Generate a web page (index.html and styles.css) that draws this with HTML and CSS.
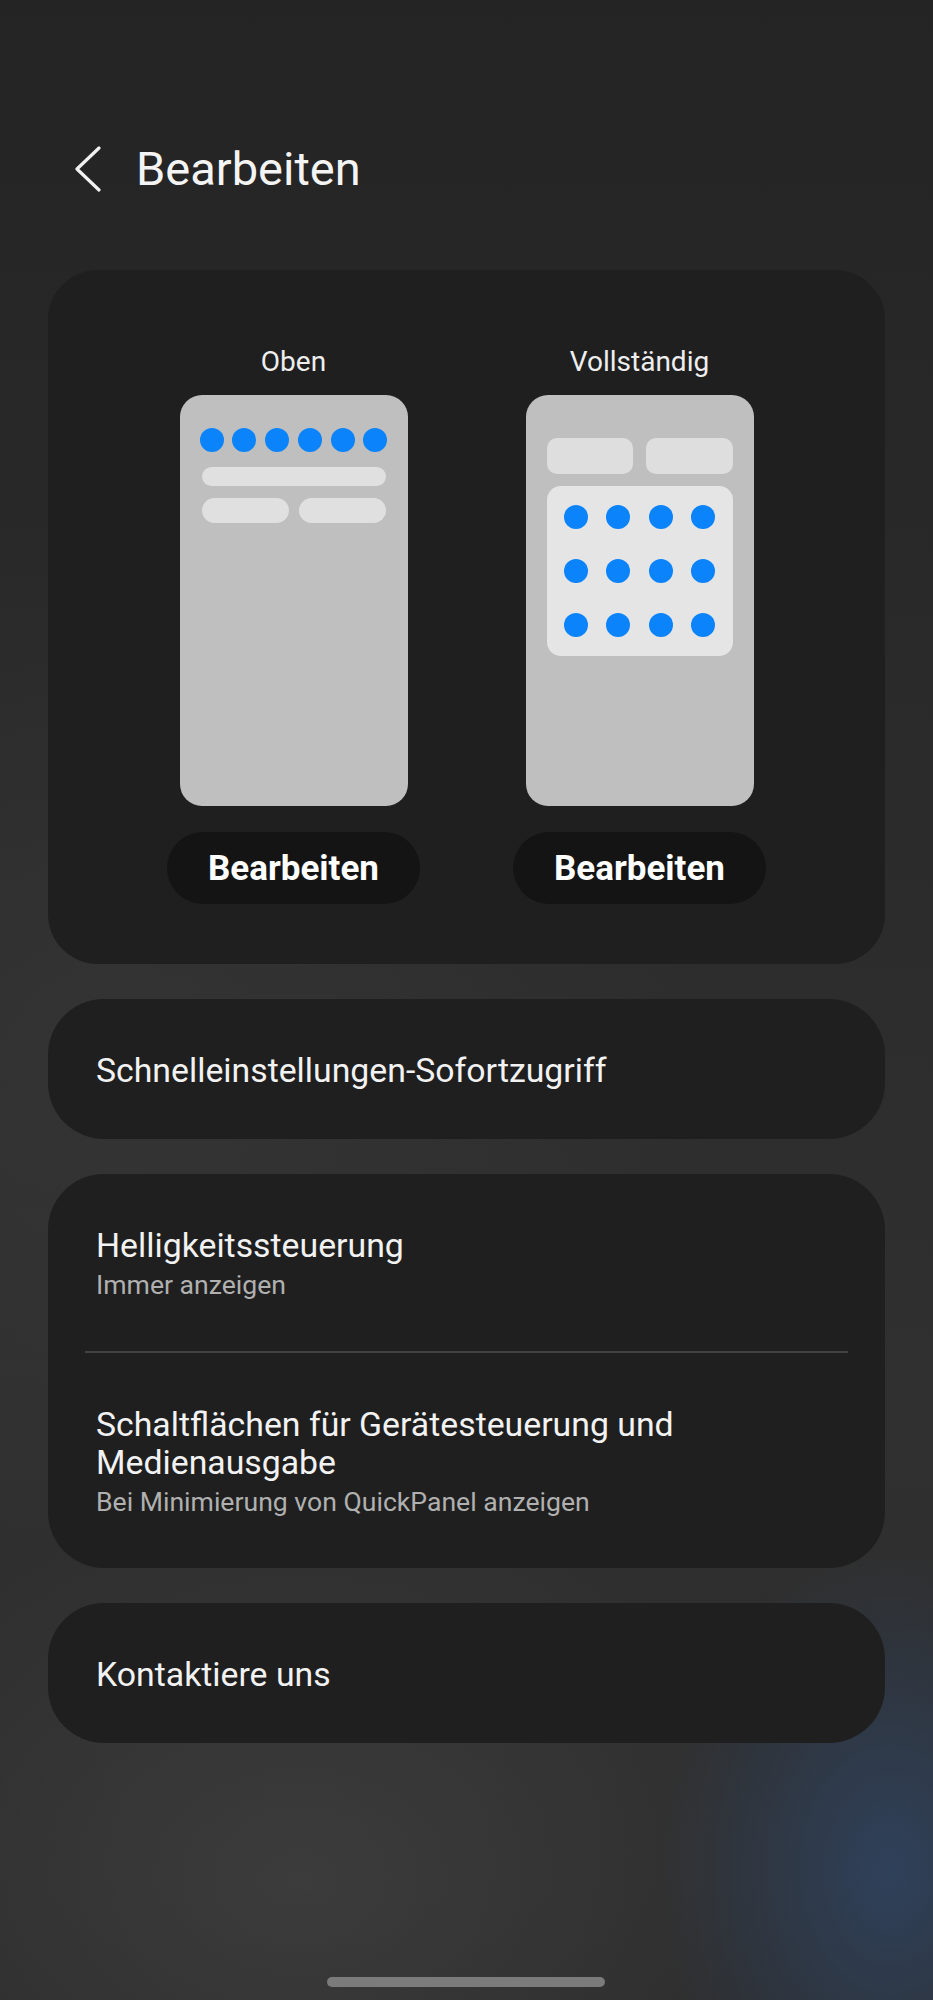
FILE: index.html
```html
<!DOCTYPE html>
<html lang="de">
<head>
    <meta charset="UTF-8">
    <meta name="viewport" content="width=device-width, initial-scale=1.0">
    <title>Bearbeiten</title>
    <link rel="stylesheet" href="styles.css">
</head>
<body>
    <div class="screen">
        <header class="topbar">
            <svg class="back" width="28" height="46" viewBox="0 0 28 46">
                <path d="M25 2 L3 23 L25 44" fill="none" stroke="#f2f2f2" stroke-width="3.2" stroke-linecap="round" stroke-linejoin="round"/>
            </svg>
            <h1 class="title">Bearbeiten</h1>
        </header>

        <main class="list">
            <section class="card layouts">
                <div class="layout">
                    <div class="layout-label">Oben</div>
                    <div class="phone">
                        <div class="dot-row">
                            <span class="dot"></span><span class="dot"></span><span class="dot"></span>
                            <span class="dot"></span><span class="dot"></span><span class="dot"></span>
                        </div>
                        <div class="bar wide"></div>
                        <div class="bar-pair">
                            <div class="bar half"></div>
                            <div class="bar half"></div>
                        </div>
                    </div>
                    <button class="edit-btn">Bearbeiten</button>
                </div>

                <div class="layout">
                    <div class="layout-label">Vollständig</div>
                    <div class="phone full">
                        <div class="tile-pair">
                            <div class="tile"></div>
                            <div class="tile"></div>
                        </div>
                        <div class="tile-grid">
                            <span class="dot"></span><span class="dot"></span><span class="dot"></span><span class="dot"></span>
                            <span class="dot"></span><span class="dot"></span><span class="dot"></span><span class="dot"></span>
                            <span class="dot"></span><span class="dot"></span><span class="dot"></span><span class="dot"></span>
                        </div>
                    </div>
                    <button class="edit-btn">Bearbeiten</button>
                </div>
            </section>

            <section class="card">
                <div class="item">
                    <div class="item-title">Schnelleinstellungen-Sofortzugriff</div>
                </div>
            </section>

            <section class="card">
                <div class="item">
                    <div class="item-title">Helligkeitssteuerung</div>
                    <div class="item-sub">Immer anzeigen</div>
                </div>
                <div class="divider"></div>
                <div class="item">
                    <div class="item-title">Schaltflächen für Gerätesteuerung und<br>Medienausgabe</div>
                    <div class="item-sub">Bei Minimierung von QuickPanel anzeigen</div>
                </div>
            </section>

            <section class="card">
                <div class="item">
                    <div class="item-title">Kontaktiere uns</div>
                </div>
            </section>
        </main>

        <div class="home-bar"></div>
    </div>
</body>
</html>
```

FILE: styles.css
```css
body {
    margin: 0;
    font-family: Roboto, "Noto Sans", sans-serif;
    color: #f2f2f2;
    background: #272727;
}
.screen {
    position: relative;
    width: 933px;
    height: 2000px;
    overflow: hidden;
    background:
        radial-gradient(ellipse 230px 320px at 890px 1870px, rgba(48, 70, 102, 0.8), rgba(48, 70, 102, 0) 100%),
        radial-gradient(ellipse 520px 380px at 300px 1880px, rgba(72, 72, 72, 0.55), rgba(72, 72, 72, 0) 100%),
        radial-gradient(ellipse 600px 500px at 120px 1050px, rgba(60, 60, 60, 0.45), rgba(60, 60, 60, 0) 100%),
        linear-gradient(180deg, #242424 0%, #2b2b2b 40%, #303030 70%, #2c2c2c 100%);
}

/* header */
.topbar {
    display: flex;
    align-items: center;
    padding: 142px 0 0 74px;
    margin-bottom: 74px;
}
.back {
    display: block;
    flex-shrink: 0;
}
.title {
    margin: 0 0 0 34px;
    font-size: 47px;
    font-weight: 400;
    line-height: 54px;
    color: #f4f4f4;
}

/* cards */
.list {
    display: flex;
    flex-direction: column;
    gap: 35px;
    padding: 0 48px;
}
.card {
    background: #1f1f1f;
    border-radius: 56px;
}

/* layout previews */
.layouts {
    display: flex;
    justify-content: center;
    gap: 93px;
    padding: 75px 0 60px;
    border-radius: 50px;
}
.layout {
    width: 253px;
    display: flex;
    flex-direction: column;
    align-items: center;
}
.layout-label {
    font-size: 28px;
    line-height: 34px;
    color: #eeeeee;
    margin-bottom: 16px;
}
.phone {
    box-sizing: border-box;
    width: 228px;
    height: 411px;
    background: #bfbfbf;
    border-radius: 22px;
    padding: 33px 20px 0;
    margin-bottom: 26px;
}
.dot {
    display: block;
    width: 24px;
    height: 24px;
    border-radius: 50%;
    background: #0a83fb;
}
.dot-row {
    display: flex;
    justify-content: space-between;
    margin-bottom: 15px;
}
.bar {
    background: #e0e0e0;
    border-radius: 13px;
}
.bar.wide {
    height: 19px;
    margin: 0 2px 12px;
}
.bar-pair {
    display: flex;
    gap: 10px;
    margin: 0 2px;
}
.bar.half {
    flex: 1;
    height: 25px;
}

.phone.full {
    padding: 43px 21px 0;
}
.tile-pair {
    display: flex;
    gap: 13px;
    margin-bottom: 12px;
}
.tile {
    flex: 1;
    height: 36px;
    background: #dedede;
    border-radius: 10px;
}
.tile-grid {
    box-sizing: border-box;
    height: 170px;
    background: #e5e5e5;
    border-radius: 14px;
    padding: 19px 17px;
    display: grid;
    grid-template-columns: repeat(4, 24px);
    justify-content: space-between;
    align-content: space-between;
}

.edit-btn {
    width: 253px;
    height: 72px;
    border: none;
    border-radius: 36px;
    background: #141414;
    color: #ffffff;
    font-family: Roboto, "Noto Sans", sans-serif;
    font-size: 35px;
    font-weight: 700;
    padding: 0;
    cursor: pointer;
}

/* list items */
.item {
    padding: 53px 48px 49px;
}
.item-title {
    font-size: 33.8px;
    line-height: 38px;
    color: #f2f2f2;
}
.item-sub {
    margin-top: 3px;
    font-size: 26.6px;
    line-height: 34px;
    color: #b0b0b0;
}
.divider {
    height: 2px;
    margin: 0 37px;
    background: #434343;
}

.home-bar {
    position: absolute;
    left: 327px;
    top: 1977px;
    width: 278px;
    height: 10px;
    border-radius: 5px;
    background: #7b7b7b;
}
```
